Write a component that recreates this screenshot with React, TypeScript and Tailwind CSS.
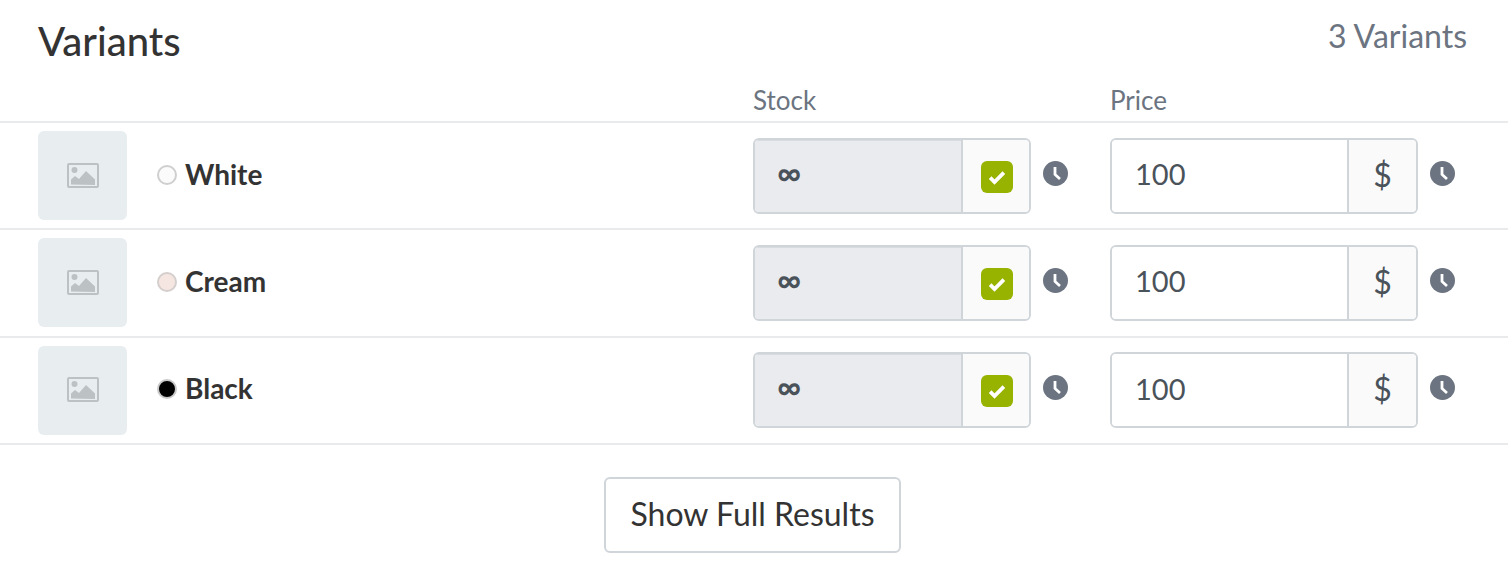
import React from "react";

type Variant = { name: string; swatch: string; ring: string };

const variants: Variant[] = [
  { name: "White", swatch: "bg-[#fbfbfb]", ring: "border-[#cfcfcf]" },
  { name: "Cream", swatch: "bg-[#f6e6e2]", ring: "border-[#d4cfcd]" },
  { name: "Black", swatch: "bg-black", ring: "border-[#c9c9c9]" },
];

function ClockIcon() {
  return (
    <svg viewBox="0 0 25 25" className="h-[25px] w-[25px] shrink-0">
      <circle cx="12.5" cy="12.5" r="12.5" fill="#6b7480" />
      <path d="M12 6v7.5l5 4.5" fill="none" stroke="#fff" strokeWidth="2.8" />
    </svg>
  );
}

function ImageIcon() {
  return (
    <svg viewBox="0 0 32 26" className="h-[26px] w-[32px]">
      <rect x="1" y="1" width="30" height="23" rx="1" fill="none" stroke="#bcc1c4" strokeWidth="2" />
      <circle cx="7.5" cy="7" r="3" fill="#bcc1c4" />
      <path d="M4 21.5v-5l4-3.5 4 3 7-8 9 8.500v5.500z" fill="#bcc1c4" />
    </svg>
  );
}

function Row({ variant }: { variant: Variant }) {
  return (
    <div className="flex h-[107.33px] items-start border-b-2 border-[#e9eaec] pl-[38px] pt-2">
      <div className="flex h-[89px] w-[89px] items-center justify-center rounded-md bg-[#e8edf0]">
        <ImageIcon />
      </div>
      <div className="ml-[30px] flex h-[87px] w-[596px] items-center">
        <span className={`h-5 w-5 rounded-full border-2 ${variant.swatch} ${variant.ring}`} />
        <span className="ml-2 pb-0.5 text-[28px] font-bold text-[#333]">{variant.name}</span>
      </div>
      <div className="mt-[6.8px] flex h-[76px] w-[278px] overflow-hidden rounded-md border-2 border-[#d0d5da]">
        <div className="flex flex-1 items-center border-t border-[#d8dbe0] bg-[#e9ebee] pb-[8px] pl-[22px] text-[33px] font-bold text-[#4a525a]">
          ∞
        </div>
        <div className="flex w-[68px] items-center justify-center border-l-2 border-[#d0d5da] bg-[#fafafa]">
          <span className="ml-px mt-0.5 flex h-8 w-8 items-center justify-center rounded-md bg-[#97b300]">
            <svg viewBox="0 0 16 16" className="h-5 w-5">
              <path d="M2.500 8.500l3.500 3.500 7.500-7.500" fill="none" stroke="#fff" strokeWidth="3" />
            </svg>
          </span>
        </div>
      </div>
      <div className="ml-3 mt-[29.8px]">
        <ClockIcon />
      </div>
      <div className="ml-[42px] mt-[6.8px] flex h-[76px] w-[308px] overflow-hidden rounded-md border-2 border-[#d0d5da]">
        <div className="flex flex-1 items-center bg-white pb-1 pl-[23px] text-[29px] text-[#4a525a]">100</div>
        <div className="flex w-[69px] items-center justify-center border-l-2 border-[#d0d5da] bg-[#fafafa] pb-0.5 text-[32px] text-[#4a525a]">
          $
        </div>
      </div>
      <div className="ml-3 mt-[29.8px]">
        <ClockIcon />
      </div>
    </div>
  );
}

export default function App() {
  return (
    <div className="h-[578px] w-[1508px] overflow-hidden bg-white font-['Lato',sans-serif]">
      <div className="flex h-[84px] items-start justify-between pl-[38px] pr-[41px]">
        <h2 className="mt-[17px] text-[40px] leading-[48px] font-medium text-[#333]">Variants</h2>
        <span className="mt-[15px] text-[32px] leading-[42px] text-[#6b7480]">3 Variants</span>
      </div>
      <div className="flex h-[39px] items-center border-b-2 border-[#e9eaec] pb-1 text-[26px] text-[#6b7480]">
        <span className="ml-[753px] w-[357px]">Stock</span>
        <span>Price</span>
      </div>
      {variants.map((v) => (
        <Row key={v.name} variant={v} />
      ))}
      <div className="mt-[32px] flex justify-center pr-[3px]">
        <button className="h-[76px] w-[297px] rounded-md border-2 border-[#d0d5da] bg-white pb-0.5 text-[32px] text-[#333]">
          Show Full Results
        </button>
      </div>
    </div>
  );
}
